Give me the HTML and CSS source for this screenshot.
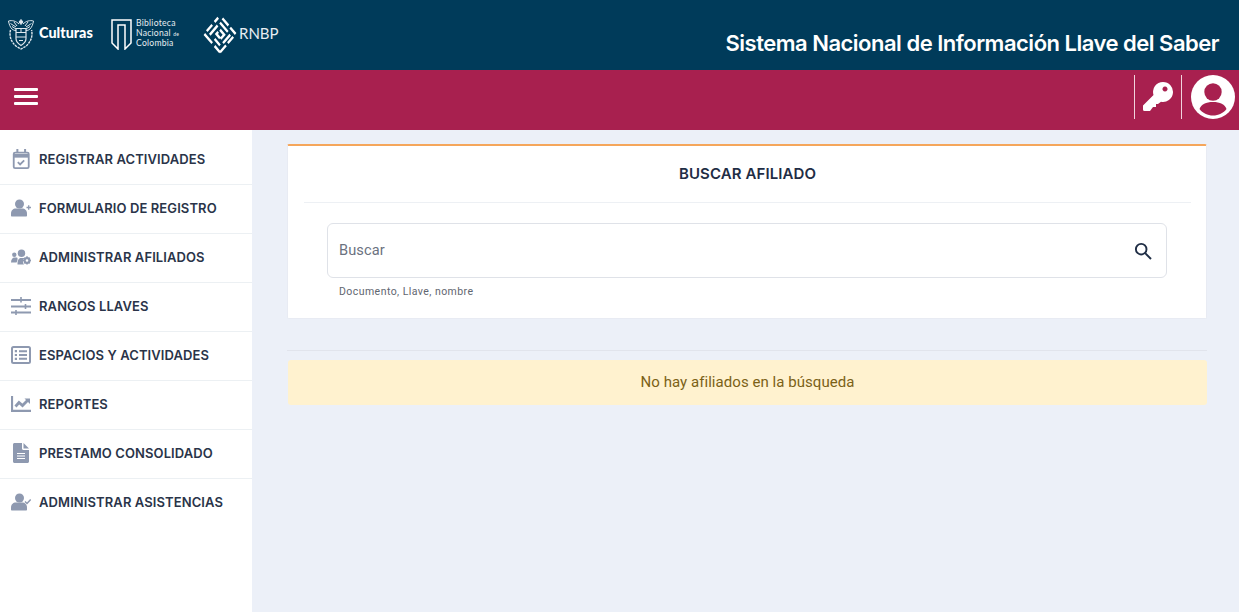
FILE: index.html
```html
<!DOCTYPE html>
<html lang="es">
<head>
<meta charset="utf-8">
<title>Sistema Nacional de Información Llave del Saber</title>
<link rel="stylesheet" href="styles.css">
</head>
<body>
<header class="topbar">
  <div class="logos">
    <div class="logo logo-culturas">
      <svg class="shield" width="28" height="32" viewBox="0 0 28 32" fill="none" stroke="#dfe8ee" stroke-width="1">
        <path d="M14 1.500l-2 2.500 2 2.500 2-2.500z" fill="#dfe8ee"/>
        <path d="M12 6C9 3 5 2 1.500 3c.5 3 1.500 6 3.500 8 1 1 2.500 1.500 4 1.500M16 6c3-3 7-4 10.500-3-.5 3-1.500 6-3.500 8-1 1-2.500 1.500-4 1.500"/>
        <path d="M3.500 5.500 9 9M5 8.500 9 11M24.500 5.500 19 9M23 8.500 19 11M7 4l3 4M21 4l-3 4"/>
        <path d="M9 10.500h10v10c0 3.500-2.500 5.500-5 7-2.500-1.500-5-3.500-5-7z" stroke-width="1.200"/>
        <path d="M9 14.500h10M9 19h10M12 22.500h4M14 10.500v4"/>
        <path d="M3.500 12c-1.500 6 .5 12 6 16.500l4.500 2.500 4.500-2.500c5.500-4.500 7.500-10.500 6-16.500" stroke-width="1.400" stroke-dasharray="2.500 .8"/>
      </svg>
      <span class="culturas">Culturas</span>
    </div>
    <div class="logo logo-bnc">
      <svg width="21" height="31" viewBox="0 0 21 31" fill="none" stroke="#fff" stroke-width="1.500">
        <path d="M1 1H20V24L14 30V6H7V30L1 24Z"/>
      </svg>
      <span class="bnc">Biblioteca<br>Nacional <small>de</small><br>Colombia</span>
    </div>
    <div class="logo logo-rnbp">
      <svg width="34" height="40" viewBox="0 0 34 40" fill="none" stroke="#fff" stroke-width="2.600">
        <g transform="translate(17 20) scale(.85 1) rotate(45) translate(-14 -14)">
          <path d="M5 1h10M18 1h9M27 5v9M27 17v10M18 27h9M1 27h13M1 14v9M1 4v6"/>
          <path d="M6 6h13M23 6v12M22 22h-9M6 23V10"/>
          <path d="M11 11h7v6M17 17h-6v-3"/>
        </g>
      </svg>
      <span class="rnbp">RNBP</span>
    </div>
  </div>
  <h1 class="system-title">Sistema Nacional de Información Llave del Saber</h1>
</header>

<div class="actionbar">
  <button class="burger" aria-label="Menú"><span></span><span></span><span></span></button>
  <div class="actions">
    <div class="action action-key">
      <svg width="30" height="30" viewBox="0 0 30 30" fill="#fff" fill-rule="evenodd"><path d="M20 0a10 10 0 1 1-2 19.800L15 22h-2v3h-3l-3 4H1.500A1.500 1.500 0 0 1 0 27.500V23.500L10.500 13A10 10 0 0 1 20 0zM22 4.500a2.500 2.500 0 1 0 .01 0z"/></svg>
    </div>
    <div class="action action-user">
      <svg width="44" height="44" viewBox="0 0 44 44"><circle cx="22" cy="22" r="22" fill="#fff"/><circle cx="22" cy="17" r="8.700" fill="#a8204f"/><path d="M8.500 34C10 29.500 15 27 22 27s12 2.500 13.500 7c-3 4-8 6.500-13.500 6.500S11.500 38 8.500 34z" fill="#a8204f"/></svg>
    </div>
  </div>
</div>

<div class="layout">
  <nav class="sidebar">
    <a class="nav-item"><svg class="ico" viewBox="0 0 20 22" fill="none" stroke="#8e99b0" stroke-width="2"><rect x="2" y="4" width="16.500" height="17" rx="1.500"/><path d="M2 7.500h16.500" stroke-width="4"/><path d="M6 0v4M14.500 0v4" stroke-width="2.200"/><path d="M6.500 14.500l2.500 2.500 4.500-4.500"/></svg><span>REGISTRAR ACTIVIDADES</span></a>
    <a class="nav-item"><svg class="ico" viewBox="0 0 20 17" fill="#8e99b0"><circle cx="8.500" cy="4.500" r="4.500"/><path d="M0 16c0 .6.400 1 1 1h14c.6 0 1-.4 1-1v-2c0-3-2-5-5-5H5c-3 0-5 2-5 5z"/><path d="M15.500 8h4.500M17.700 5.800v4.500" fill="none" stroke="#8e99b0" stroke-width="1.300"/></svg><span>FORMULARIO DE REGISTRO</span></a>
    <a class="nav-item"><svg class="ico" viewBox="0 0 20 15" fill="#8e99b0"><circle cx="10.500" cy="3.700" r="3.700"/><circle cx="3.300" cy="5.300" r="2.200"/><path d="M0 13c0-3 1.500-5 3.500-5H6c.8 0 .8 3-.5 5z"/><path d="M6.500 15c0-4 1-6.500 3.500-6.500h3.500c-2 2-2 4.500-.5 6.500z"/><circle cx="16" cy="11" r="2.400" fill="none" stroke="#8e99b0" stroke-width="2.200"/><path d="M16 6.800v1.700M16 13.500v1.500M12 11h1.500M18.500 11H20M13.200 8.200l1 1M17.800 12.800l1 1M13.200 13.800l1-1M17.800 9.200l1-1" stroke="#8e99b0" stroke-width="1.500"/></svg><span>ADMINISTRAR AFILIADOS</span></a>
    <a class="nav-item"><svg class="ico" viewBox="0 0 20 18" fill="none" stroke="#8e99b0" stroke-width="2.200"><path d="M0 3h20M0 9.500h20M0 15.500h20"/><path d="M10 0v5.500M14.500 7v5M5 13v5" stroke-width="1.600"/></svg><span>RANGOS LLAVES</span></a>
    <a class="nav-item"><svg class="ico" viewBox="0 0 20 18" fill="none" stroke="#8e99b0" stroke-width="2"><rect x="1" y="1" width="18" height="16" rx="1.500"/><path d="M8 5.200h8M8 9h8M8 12.800h8" stroke-width="2"/><path d="M3.800 5.200h2.200M3.800 9h2.200M3.800 12.800h2.200" stroke-width="2.200"/></svg><span>ESPACIOS Y ACTIVIDADES</span></a>
    <a class="nav-item"><svg class="ico" viewBox="0 0 20 16" fill="none" stroke="#8e99b0"><path d="M1 0v14.800h19" stroke-width="2.200"/><path d="M4.500 10.500 8 6.500l3.500 3 5-5" stroke-width="2.800"/><path d="M13.500 2.500H19V8z" fill="#8e99b0" stroke="none"/></svg><span>REPORTES</span></a>
    <a class="nav-item"><svg class="ico" viewBox="0 0 16 20" fill="#8e99b0"><path d="M0 1.500C0 .7.700 0 1.500 0H9v5.500c0 .8.700 1.500 1.500 1.500H16v11.500c0 .8-.7 1.500-1.500 1.500h-13C.7 20 0 19.300 0 18.500z"/><path d="M10.500 0 16 5.500h-5.500z"/><path d="M4 10.500h8M4 13h8M4 15.500h8" stroke="#fff" stroke-width="1"/></svg><span>PRESTAMO CONSOLIDADO</span></a>
    <a class="nav-item"><svg class="ico" viewBox="0 0 20 17" fill="#8e99b0"><circle cx="8.500" cy="4.500" r="4.500"/><path d="M0 16c0 .6.400 1 1 1h14c.6 0 1-.4 1-1v-2c0-3-2-5-5-5H5c-3 0-5 2-5 5z"/><path d="M14 8l2 2 3.700-4" fill="none" stroke="#8e99b0" stroke-width="1.500"/></svg><span>ADMINISTRAR ASISTENCIAS</span></a>
  </nav>

  <main class="content">
    <section class="card">
      <h2 class="card-title">BUSCAR AFILIADO</h2>
      <div class="card-body">
        <div class="search">
          <span class="placeholder">Buscar</span>
          <svg width="20" height="20" viewBox="0 0 20 20" fill="none" stroke="#1f2d45" stroke-width="1.900"><circle cx="8.200" cy="8.200" r="5.300"/><path d="M12.200 12.200 18 18"/></svg>
        </div>
        <p class="help">Documento, Llave, nombre</p>
      </div>
    </section>
    <hr class="divider">
    <div class="alert">No hay afiliados en la búsqueda</div>
  </main>
</div>
</body>
</html>
```

FILE: styles.css
```css
* { box-sizing: border-box; }
html, body { margin: 0; height: 100%; }
body {
  min-height: 612px;
  height: 612px;
  overflow: hidden;
  display: flex;
  flex-direction: column;
  background: #ecf0f8;
  font-family: "Roboto", "Liberation Sans", sans-serif;
  color: #1f2d45;
}
.topbar {
  height: 70px;
  flex: none;
  background: #003b5a;
  display: flex;
  justify-content: space-between;
  padding: 0 20px 0 7px;
  color: #fff;
}
.logos { display: flex; align-items: flex-start; padding-top: 14px; }
.logo { display: flex; align-items: center; height: 40px; }
.logo-culturas { gap: 4px; width: 104px; }
.culturas { font: 900 14.4px "Lato", sans-serif; margin-bottom: 3px; }
.logo-bnc { gap: 4px; width: 92px; }
.bnc { font: 400 8.6px/9.5px "Lato", sans-serif; letter-spacing: 0.25px; color: #e8eef2; }
.bnc small { font-size: 5px; }
.logo-rnbp { gap: 2px; }
.rnbp { font: 400 15px "Lato", sans-serif; color: #e8eef2; margin-bottom: 3px; }
.system-title {
  margin: 28px 0 0;
  font: 600 22px/30px "Inter", sans-serif;
  letter-spacing: -0.5px;
  white-space: nowrap;
}
.actionbar {
  height: 60px;
  flex: none;
  background: #a8204f;
  display: flex;
  justify-content: space-between;
  align-items: center;
  padding: 0 4px 0 14px;
}
.burger {
  width: 24px;
  height: 17px;
  margin-bottom: 8px;
  padding: 0;
  border: 0;
  background: none;
  display: flex;
  flex-direction: column;
  justify-content: space-between;
}
.burger span { height: 3px; background: #fff; border-radius: 1px; }
.actions { display: flex; margin-bottom: 6px; }
.action {
  height: 44px;
  border-left: 1px solid #f1d3dd;
  display: flex;
  align-items: center;
}
.action-key { width: 47px; padding-left: 8px; }
.action-user { padding-left: 9px; }
.layout { flex: 1; display: flex; min-height: 0; }
.sidebar { width: 252px; flex: none; background: #fff; padding-top: 6px; }
.nav-item {
  height: 49px;
  padding: 0 10px 2px 11px;
  display: flex;
  align-items: center;
  gap: 8px;
  border-bottom: 1px solid #ecf0f3;
  font: 600 13px "Inter", sans-serif;
  letter-spacing: 0.1px;
  color: #2a3449;
  white-space: nowrap;
}
.nav-item:last-child { border-bottom-color: transparent; }
.ico { width: 20px; height: 20px; flex: none; }
.content { flex: 1; min-width: 0; padding: 14px 32px 0 35px; }
.card {
  height: 175px;
  background: #fff;
  border: 1px solid #e8ebf3;
  border-top: 2px solid #f5a65b;
  border-radius: 2px;
  padding: 0 15px 0 16px;
}
.card-title {
  margin: 0;
  height: 57px;
  border-bottom: 1px solid #edf0f4;
  text-align: center;
  font: 600 15px/55px "Inter", sans-serif;
  letter-spacing: 0.1px;
  color: #1f2d45;
}
.card-body { padding: 20px 24px 0 23px; }
.search {
  height: 55px;
  border: 1px solid #dfe2e8;
  border-radius: 6px;
  display: flex;
  align-items: center;
  justify-content: space-between;
  padding: 0 13px 0 11px;
}
.placeholder { font-size: 14.6px; color: #6b7280; letter-spacing: 0.1px; margin-bottom: 2px; }
.help { margin: 7px 0 0 12px; font-size: 10.5px; line-height: 13px; color: #5f6670; letter-spacing: 0.45px; }
.divider { margin: 31px 0 9px; border: 0; border-top: 1px solid #e1e4ec; }
.alert {
  height: 45px;
  margin-left: 1px;
  background: #fff2cf;
  border-radius: 3px;
  text-align: center;
  font-size: 15px;
  line-height: 45px;
  letter-spacing: 0.05px;
  color: #7b6116;
}
```
